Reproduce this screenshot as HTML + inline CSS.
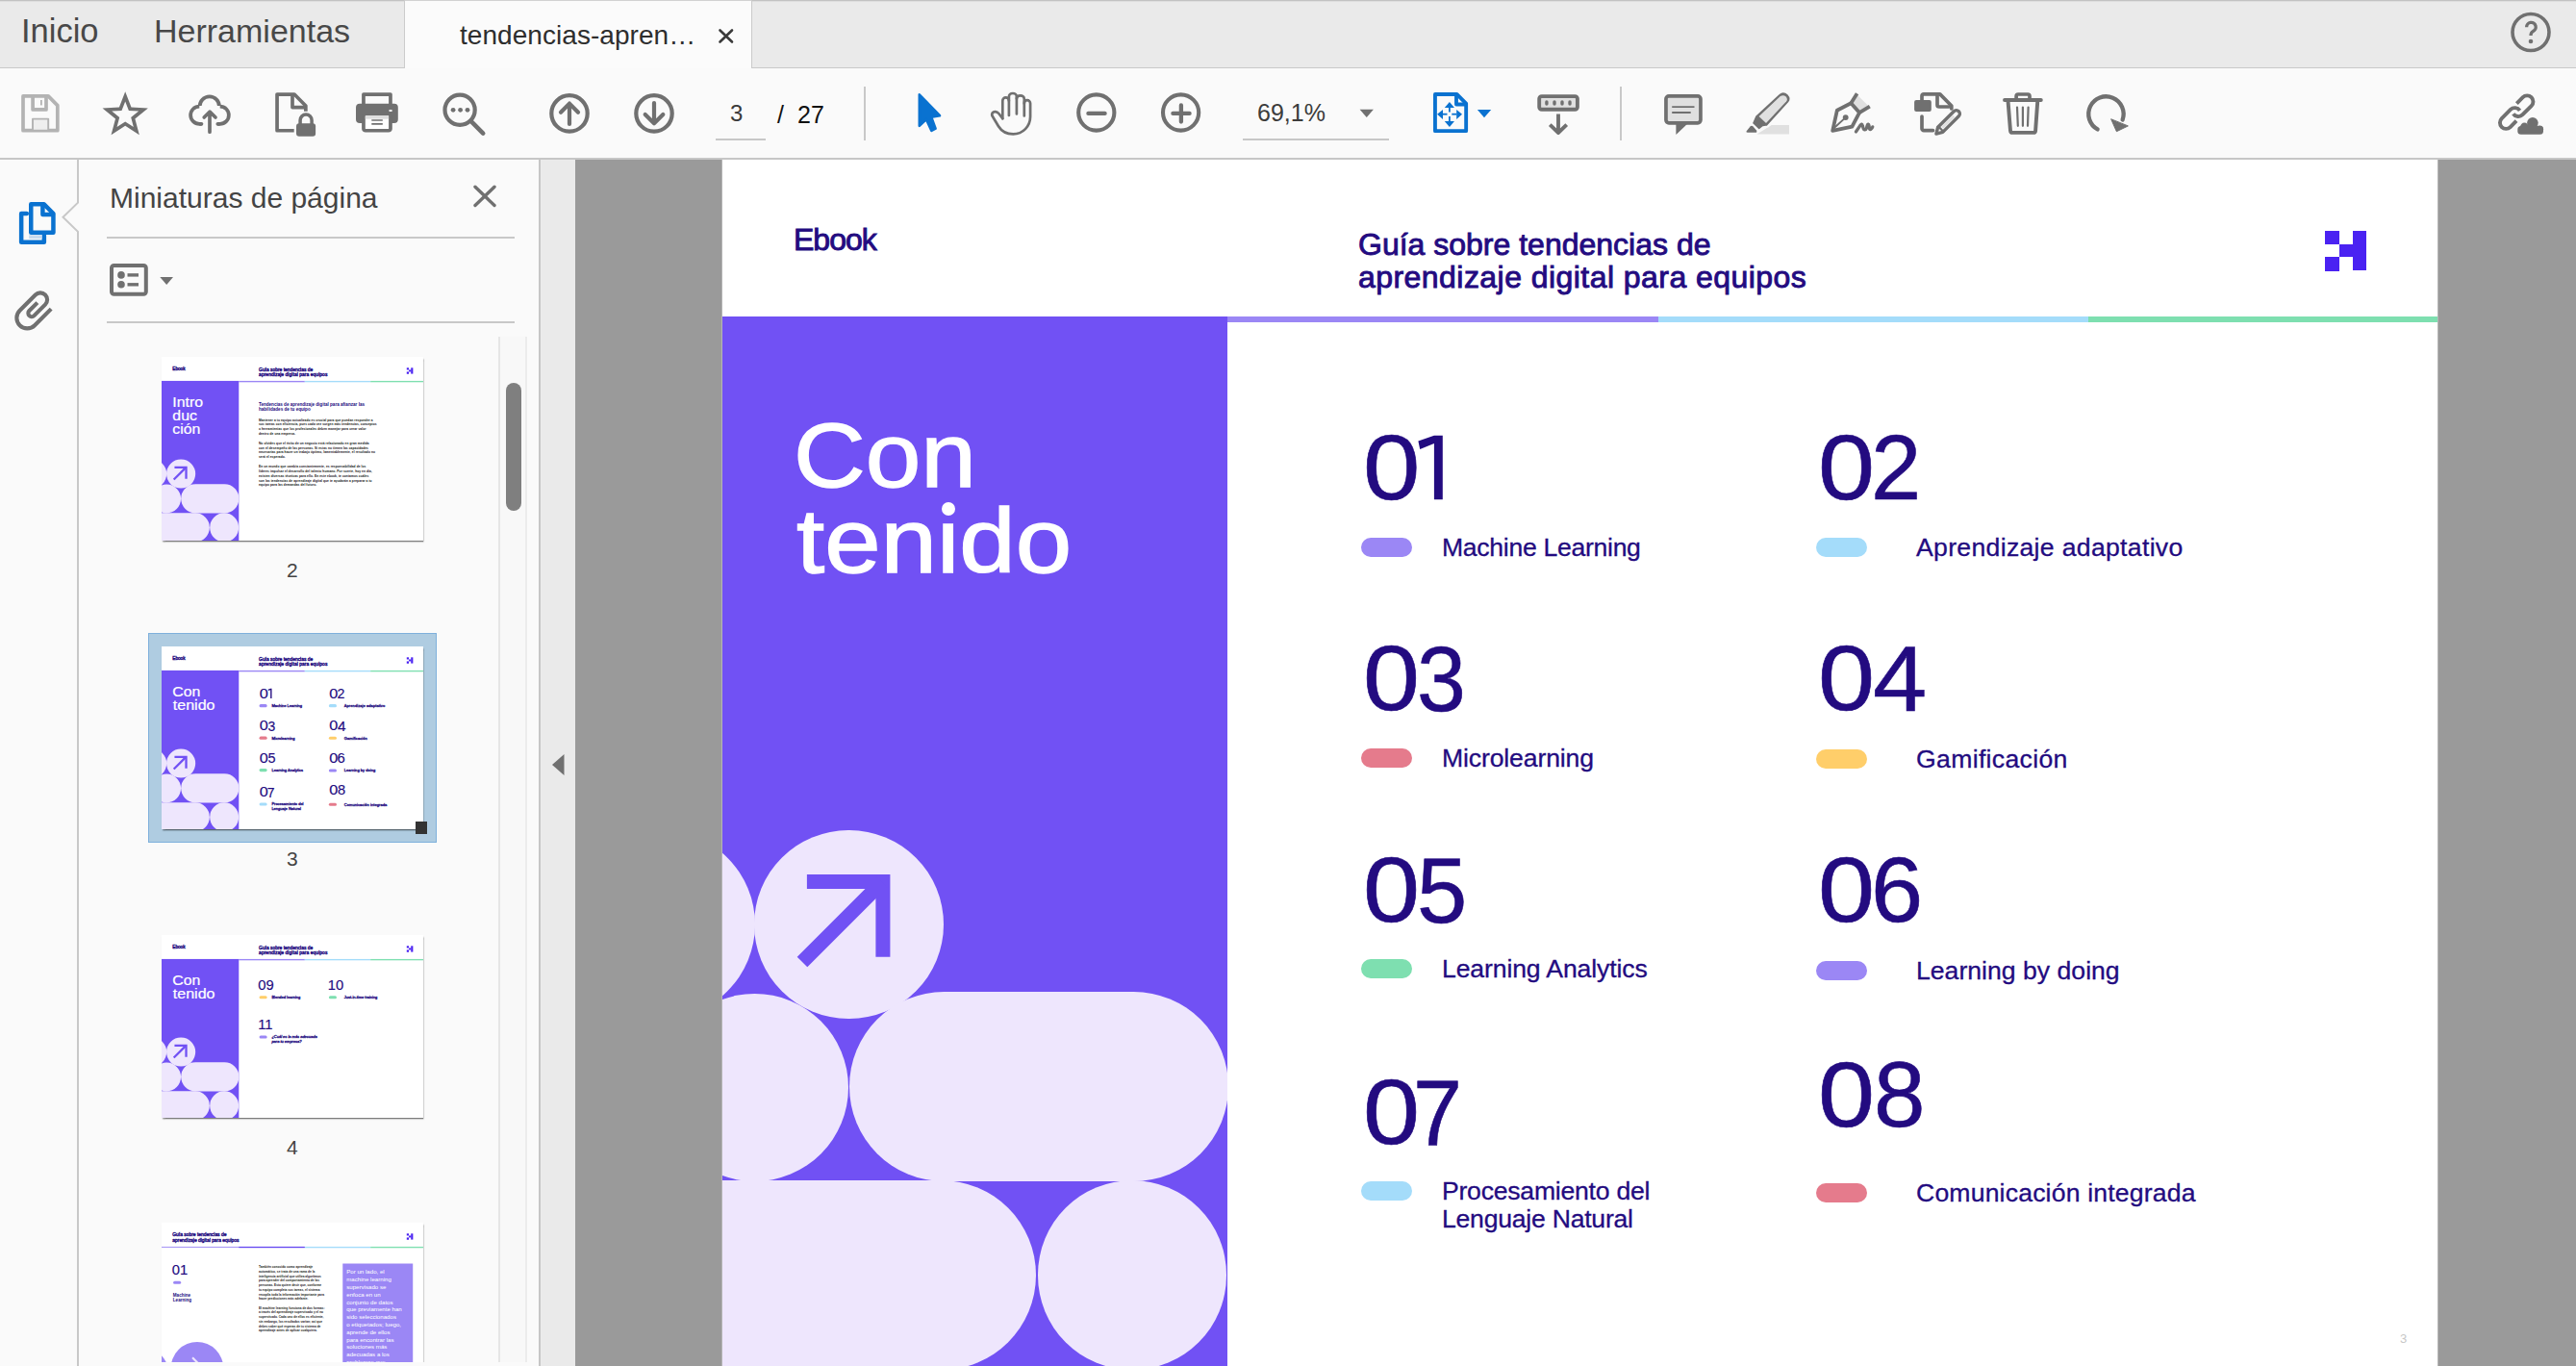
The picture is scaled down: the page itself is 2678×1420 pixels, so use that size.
<!DOCTYPE html>
<html><head><meta charset="utf-8">
<style>
*{margin:0;padding:0;box-sizing:border-box}
html,body{width:2678px;height:1420px;overflow:hidden;background:#9a9a9a;font-family:"Liberation Sans",sans-serif}
.a{position:absolute}
.t{position:absolute;white-space:nowrap;line-height:1}
svg{position:absolute;overflow:visible}
.hd{color:#230b80;-webkit-text-stroke:0.9px #230b80}
.lg{background:#4a22f2}
.num{font-size:96.5px;color:#230b80;-webkit-text-stroke:0.6px #230b80}
.pill{width:52.6px;height:20.2px;border-radius:10.1px}
.lab{font-size:26.6px;line-height:29px;color:#230b80;letter-spacing:-0.3px;-webkit-text-stroke:0.3px #230b80}
.lav{background:#eee6fd}
.th .hd{-webkit-text-stroke:2.5px #230b80}
.th .lab{-webkit-text-stroke:2px #230b80}
.th .num{-webkit-text-stroke:1px #230b80}
</style></head><body>
<!-- ===== TAB BAR ===== -->
<div class="a" style="left:0;top:0;width:2678px;height:71px;background:#eaeaea"></div>
<div class="a" style="left:0;top:0;width:2678px;height:1px;background:#c2c2c2"></div>
<div class="a" style="left:0;top:1px;width:2678px;height:1px;background:#dedede"></div>
<div class="a" style="left:0;top:70px;width:2678px;height:1px;background:#c9c9c9"></div>
<div class="a" style="left:420px;top:0;width:362px;height:71px;background:#fbfbfb;border-left:1px solid #cbcbcb;border-right:1px solid #cbcbcb"></div>
<div class="a" style="left:421px;top:0;width:360px;height:1px;background:#d2d2d2"></div>
<div class="t" style="left:22px;top:15px;font-size:34.5px;color:#484848">Inicio</div>
<div class="t" style="left:160px;top:15px;font-size:34px;color:#484848">Herramientas</div>
<div class="t" style="left:478px;top:22.5px;font-size:28px;color:#2e2e2e;letter-spacing:0.05px">tendencias-apren&#8230;</div>
<!-- ===== TOOLBAR ===== -->
<div class="a" style="left:0;top:71px;width:2678px;height:93px;background:#fafafa"></div>
<div class="a" style="left:0;top:164px;width:2678px;height:2px;background:#c6c6c6"></div>
<!-- ===== LEFT RAIL + PANEL ===== -->
<div class="a" style="left:0;top:166px;width:560px;height:1254px;background:#fafafa"></div>
<div class="a" style="left:560px;top:166px;width:2px;height:1254px;background:#c6c6c6"></div>
<div class="a" style="left:562px;top:166px;width:36px;height:1254px;background:#eaeaea"></div>
<!-- tab close x -->
<svg style="left:0;top:0" width="1" height="1"><path d="M748.5,31.5 L761,43.5 M761,31.5 L748.5,43.5" stroke="#3a3a3a" stroke-width="2.6" stroke-linecap="round"/></svg>
<!-- page nav text -->
<div class="t" style="left:759px;top:106px;font-size:24px;color:#3a3a3a">3</div>
<div class="a" style="left:744px;top:144px;width:52px;height:2px;background:#c8c8c8"></div>
<div class="t" style="left:808px;top:107px;font-size:25px;color:#111">/</div>
<div class="t" style="left:829px;top:107px;font-size:25px;color:#111">27</div>
<div class="t" style="left:1307px;top:105px;font-size:25px;color:#3c3c3c">69,1%</div>
<div class="a" style="left:1292px;top:144px;width:152px;height:2px;background:#c8c8c8"></div>
<!-- rail border with notch -->
<svg style="left:0;top:0" width="1" height="1"><path d="M81,166 V210.7 L65.5,225.8 L81,240.9 V1420" fill="none" stroke="#c8c8c8" stroke-width="2"/></svg>
<!-- panel header -->
<div class="t" style="left:114px;top:190.5px;font-size:30px;color:#444">Miniaturas de página</div>
<div class="a" style="left:111px;top:246px;width:424px;height:2px;background:#c8c8c8"></div>
<div class="a" style="left:111px;top:334px;width:424px;height:2px;background:#c8c8c8"></div>
<!-- scrollbar -->
<div class="a" style="left:518px;top:350px;width:30px;height:1066px;background:#f8f8f8;border-left:2px solid #e6e6e6;border-right:2px solid #ececec"></div>
<div class="a" style="left:526px;top:398px;width:16px;height:133px;border-radius:8px;background:#7f7f7f"></div>

<div class="a" style="left:750px;top:166px;width:1px;height:1254px;background:#b5b5b5"></div>
<div class="a" style="left:751px;top:166px;width:1783px;height:1254px;overflow:hidden">
<div class="a" style="left:0;top:0;width:1783px;height:1260px;background:#fff;overflow:hidden"><div class="t hd" style="left:74px;top:67px;font-size:32px;letter-spacing:-1px">Ebook</div><div class="t hd" style="left:661px;top:70.5px;font-size:32px;line-height:34.8px">Guía sobre tendencias de<br><span style="letter-spacing:0.45px">aprendizaje digital para equipos</span></div><div class="a lg" style="left:1666px;top:74px;width:15px;height:14px"></div><div class="a lg" style="left:1681px;top:88px;width:14px;height:13px"></div><div class="a lg" style="left:1666px;top:101px;width:15px;height:15px"></div><div class="a lg" style="left:1695px;top:74px;width:14px;height:41px"></div><div class="a" style="left:525px;top:163px;width:448px;height:6px;background:#9b87f5"></div><div class="a" style="left:973px;top:163px;width:447px;height:6px;background:#a4dcfa"></div><div class="a" style="left:1420px;top:163px;width:363px;height:6px;background:#7edfb0"></div><div class="t num" style="left:665.58px;top:271.80px;transform:scaleX(1.1064);transform-origin:0 0">0</div><svg style="left:0;top:0" width="1" height="1"><polygon fill="#230b80" points="748.8,286.8 748.8,353.2 739.9,353.2 739.9,295.1 725.2,301.0 723.4,292.4 739.9,286.8"/></svg><div class="t num" style="left:1138.90px;top:271.90px;transform:scaleX(1.1000);transform-origin:0 0">0</div><div class="t num" style="left:1194.31px;top:271.90px;transform:scaleX(0.9733);transform-origin:0 0">2</div><div class="t num" style="left:665.91px;top:490.90px;transform:scaleX(1.0979);transform-origin:0 0">0</div><div class="t num" style="left:722.06px;top:491.90px;transform:scaleX(0.9468);transform-origin:0 0">3</div><div class="t num" style="left:1138.90px;top:490.90px;transform:scaleX(1.1000);transform-origin:0 0">0</div><div class="t num" style="left:1195.81px;top:491.90px;transform:scaleX(1.0469);transform-origin:0 0">4</div><div class="t num" style="left:665.90px;top:710.90px;transform:scaleX(1.1000);transform-origin:0 0">0</div><div class="t num" style="left:722.30px;top:711.90px;transform:scaleX(0.9739);transform-origin:0 0">5</div><div class="t num" style="left:1138.90px;top:710.90px;transform:scaleX(1.1000);transform-origin:0 0">0</div><div class="t num" style="left:1194.17px;top:710.90px;transform:scaleX(1.0087);transform-origin:0 0">6</div><div class="t num" style="left:665.90px;top:941.90px;transform:scaleX(1.1000);transform-origin:0 0">0</div><div class="t num" style="left:717.85px;top:942.80px;transform:scaleX(0.9500);transform-origin:0 0">7</div><div class="t num" style="left:1138.90px;top:923.80px;transform:scaleX(1.1000);transform-origin:0 0">0</div><div class="t num" style="left:1196.52px;top:923.80px;transform:scaleX(0.9957);transform-origin:0 0">8</div><div class="a pill" style="left:664.2px;top:392.79999999999995px;background:#9b87f5"></div><div class="t lab" style="left:748px;top:388.79999999999995px;letter-spacing:-0.300px">Machine Learning</div><div class="a pill" style="left:1137px;top:392.79999999999995px;background:#a4dcfa"></div><div class="t lab" style="left:1241px;top:388.79999999999995px;letter-spacing:0.319px">Aprendizaje adaptativo</div><div class="a pill" style="left:664.2px;top:611.5px;background:#e57b8c"></div><div class="t lab" style="left:748px;top:607.5px;letter-spacing:-0.133px">Microlearning</div><div class="a pill" style="left:1137px;top:613px;background:#ffce6a"></div><div class="t lab" style="left:1241px;top:609px;letter-spacing:0.336px">Gamificación</div><div class="a pill" style="left:664.2px;top:831px;background:#7edfb0"></div><div class="t lab" style="left:748px;top:827px;letter-spacing:-0.124px">Learning Analytics</div><div class="a pill" style="left:1137px;top:833px;background:#9b87f5"></div><div class="t lab" style="left:1241px;top:829px;letter-spacing:0.013px">Learning by doing</div><div class="a pill" style="left:664.2px;top:1062px;background:#a4dcfa"></div><div class="t lab" style="left:748px;top:1058px;letter-spacing:-0.237px">Procesamiento del<br>Lenguaje Natural</div><div class="a pill" style="left:1137px;top:1064px;background:#e57b8c"></div><div class="t lab" style="left:1241px;top:1060px;letter-spacing:0.176px">Comunicación integrada</div><div class="t" style="left:1744px;top:1219px;font-size:13px;color:#c8c8c8">3</div><div class="a" style="left:0;top:163px;width:525px;height:1100px;background:#7151f4;overflow:hidden"><div class="t" style="left:74px;top:97px;font-size:95px;color:#fff;-webkit-text-stroke:1.4px #fff;transform:scaleX(1.09);transform-origin:0 0">Con</div><div class="t" style="left:77px;top:186px;font-size:95px;color:#fff;-webkit-text-stroke:1.4px #fff;transform:scaleX(1.105);transform-origin:0 0">tenido</div><div class="a" style="left:228px;top:194.5px;width:13.5px;height:12.5px;background:#7151f4"></div><div class="a" style="left:227.7px;top:193.1px;width:14px;height:14px;border-radius:50%;background:#fff"></div><div class="a" style="left:0;top:-163px;width:525px;height:1260px"><div class="a lav" style="left:-162.79999999999995px;top:696.6px;width:196.8px;height:196.8px;border-radius:50%"></div><div class="a lav" style="left:33.0px;top:696.6px;width:196.8px;height:196.8px;border-radius:50%"></div><div class="a lav" style="left:-64.10000000000002px;top:866.7px;width:195.0px;height:195.0px;border-radius:50%"></div><div class="a lav" style="left:131.79999999999995px;top:864.8px;width:393.9000000000001px;height:196.8px;border-radius:98.4px"></div><div class="a lav" style="left:-151px;top:1060.8999999999999px;width:477.29999999999995px;height:196.8px;border-radius:98.4px"></div><div class="a lav" style="left:327.5999999999999px;top:1060.8999999999999px;width:196.8px;height:196.8px;border-radius:50%"></div><svg style="left:0;top:0" width="1" height="1"><path d="M87.89999999999998,750.5 H166.89999999999998 V828.8" fill="none" stroke="#7151f4" stroke-width="15"/><path d="M166,751 L83,834" stroke="#7151f4" stroke-width="15"/></svg></div></div></div>
</div>
<div class="a" style="left:2534px;top:166px;width:1px;height:1254px;background:#b5b5b5"></div>

<div class="a" style="left:83px;top:336px;width:434px;height:1079.7px;overflow:hidden"><div class="a" style="left:-83px;top:-336px;width:600px;height:1500px"><div class="a" style="left:167.7px;top:371.4px;width:272.7px;height:190.3px;overflow:hidden;background:#fff;box-shadow:0.5px 1.5px 1.5px rgba(0,0,0,0.5)"><div class="a th" style="left:0;top:0;width:1783px;height:1244px;transform:scale(0.15294);transform-origin:0 0"><div class="a" style="left:0;top:0;width:1783px;height:1260px;background:#fff;overflow:hidden"><div class="t hd" style="left:74px;top:67px;font-size:32px;letter-spacing:-1px">Ebook</div><div class="t hd" style="left:661px;top:70.5px;font-size:32px;line-height:34.8px">Guía sobre tendencias de<br><span style="letter-spacing:0.45px">aprendizaje digital para equipos</span></div><div class="a lg" style="left:1666px;top:74px;width:15px;height:14px"></div><div class="a lg" style="left:1681px;top:88px;width:14px;height:13px"></div><div class="a lg" style="left:1666px;top:101px;width:15px;height:15px"></div><div class="a lg" style="left:1695px;top:74px;width:14px;height:41px"></div><div class="a" style="left:525px;top:163px;width:448px;height:9px;background:#9b87f5"></div><div class="a" style="left:973px;top:163px;width:447px;height:9px;background:#a4dcfa"></div><div class="a" style="left:1420px;top:163px;width:363px;height:9px;background:#7edfb0"></div><div class="t" style="left:660px;top:307px;font-size:30px;line-height:34px;font-weight:bold;color:#230b80">Tendencias de aprendizaje digital para afianzar las<br>habilidades de tu equipo</div><div class="t" style="left:660px;top:417px;font-size:21px;font-weight:bold;letter-spacing:0.6px;color:#111">Mantener a tu equipo actualizado es crucial para que puedan responder a</div><div class="t" style="left:660px;top:448.7px;font-size:21px;font-weight:bold;letter-spacing:0.6px;color:#111">sus tareas con eficiencia, pues cada vez surgen más tendencias, conceptos</div><div class="t" style="left:660px;top:480.4px;font-size:21px;font-weight:bold;letter-spacing:0.6px;color:#111">o herramientas que los profesionales deben manejar para crear valor</div><div class="t" style="left:660px;top:512.1px;font-size:21px;font-weight:bold;letter-spacing:0.6px;color:#111">dentro de una empresa.</div><div class="t" style="left:660px;top:575.8000000000001px;font-size:21px;font-weight:bold;letter-spacing:0.6px;color:#111">No olvides que el éxito de un negocio está relacionado en gran medida</div><div class="t" style="left:660px;top:607.5000000000001px;font-size:21px;font-weight:bold;letter-spacing:0.6px;color:#111">con el desempeño de las personas. Si estas no tienen las capacidades</div><div class="t" style="left:660px;top:639.2000000000002px;font-size:21px;font-weight:bold;letter-spacing:0.6px;color:#111">necesarias para hacer un trabajo óptimo, lamentablemente, el resultado no</div><div class="t" style="left:660px;top:670.9000000000002px;font-size:21px;font-weight:bold;letter-spacing:0.6px;color:#111">será el esperado.</div><div class="t" style="left:660px;top:734.6000000000003px;font-size:21px;font-weight:bold;letter-spacing:0.6px;color:#111">En un mundo que cambia constantemente, es responsabilidad de los</div><div class="t" style="left:660px;top:766.3000000000003px;font-size:21px;font-weight:bold;letter-spacing:0.6px;color:#111">líderes impulsar el desarrollo del talento humano. Por suerte, hoy en día,</div><div class="t" style="left:660px;top:798.0000000000003px;font-size:21px;font-weight:bold;letter-spacing:0.6px;color:#111">existen diversas técnicas para ello. En este ebook, te contamos cuáles</div><div class="t" style="left:660px;top:829.7000000000004px;font-size:21px;font-weight:bold;letter-spacing:0.6px;color:#111">son las tendencias de aprendizaje digital que te ayudarán a preparar a tu</div><div class="t" style="left:660px;top:861.4000000000004px;font-size:21px;font-weight:bold;letter-spacing:0.6px;color:#111">equipo para las demandas del futuro.</div><div class="a" style="left:0;top:163px;width:525px;height:1100px;background:#7151f4;overflow:hidden"><div class="t" style="left:74px;top:103px;font-size:95px;line-height:89px;color:#fff;-webkit-text-stroke:1.4px #fff;transform:scaleX(1.09);transform-origin:0 0">Intro<br>duc<br>ción</div><div class="a" style="left:0;top:-163px;width:525px;height:1260px"><div class="a lav" style="left:-162.79999999999995px;top:696.6px;width:196.8px;height:196.8px;border-radius:50%"></div><div class="a lav" style="left:33.0px;top:696.6px;width:196.8px;height:196.8px;border-radius:50%"></div><div class="a lav" style="left:-64.10000000000002px;top:866.7px;width:195.0px;height:195.0px;border-radius:50%"></div><div class="a lav" style="left:131.79999999999995px;top:864.8px;width:393.9000000000001px;height:196.8px;border-radius:98.4px"></div><div class="a lav" style="left:-151px;top:1060.8999999999999px;width:477.29999999999995px;height:196.8px;border-radius:98.4px"></div><div class="a lav" style="left:327.5999999999999px;top:1060.8999999999999px;width:196.8px;height:196.8px;border-radius:50%"></div><svg style="left:0;top:0" width="1" height="1"><path d="M87.89999999999998,750.5 H166.89999999999998 V828.8" fill="none" stroke="#7151f4" stroke-width="15"/><path d="M166,751 L83,834" stroke="#7151f4" stroke-width="15"/></svg></div></div></div></div></div><div class="a" style="left:154px;top:658px;width:300px;height:218px;background:#afcce1;border:1px solid #7eb0dc"></div><div class="a" style="left:167.7px;top:671.8px;width:272.7px;height:190.3px;overflow:hidden;background:#fff;box-shadow:0.5px 1.5px 1.5px rgba(0,0,0,0.5)"><div class="a th" style="left:0;top:0;width:1783px;height:1244px;transform:scale(0.15294);transform-origin:0 0"><div class="a" style="left:0;top:0;width:1783px;height:1260px;background:#fff;overflow:hidden"><div class="t hd" style="left:74px;top:67px;font-size:32px;letter-spacing:-1px">Ebook</div><div class="t hd" style="left:661px;top:70.5px;font-size:32px;line-height:34.8px">Guía sobre tendencias de<br><span style="letter-spacing:0.45px">aprendizaje digital para equipos</span></div><div class="a lg" style="left:1666px;top:74px;width:15px;height:14px"></div><div class="a lg" style="left:1681px;top:88px;width:14px;height:13px"></div><div class="a lg" style="left:1666px;top:101px;width:15px;height:15px"></div><div class="a lg" style="left:1695px;top:74px;width:14px;height:41px"></div><div class="a" style="left:525px;top:163px;width:448px;height:9px;background:#9b87f5"></div><div class="a" style="left:973px;top:163px;width:447px;height:9px;background:#a4dcfa"></div><div class="a" style="left:1420px;top:163px;width:363px;height:9px;background:#7edfb0"></div><div class="t num" style="left:665.58px;top:271.80px;transform:scaleX(1.1064);transform-origin:0 0">0</div><svg style="left:0;top:0" width="1" height="1"><polygon fill="#230b80" points="748.8,286.8 748.8,353.2 739.9,353.2 739.9,295.1 725.2,301.0 723.4,292.4 739.9,286.8"/></svg><div class="t num" style="left:1138.90px;top:271.90px;transform:scaleX(1.1000);transform-origin:0 0">0</div><div class="t num" style="left:1194.31px;top:271.90px;transform:scaleX(0.9733);transform-origin:0 0">2</div><div class="t num" style="left:665.91px;top:490.90px;transform:scaleX(1.0979);transform-origin:0 0">0</div><div class="t num" style="left:722.06px;top:491.90px;transform:scaleX(0.9468);transform-origin:0 0">3</div><div class="t num" style="left:1138.90px;top:490.90px;transform:scaleX(1.1000);transform-origin:0 0">0</div><div class="t num" style="left:1195.81px;top:491.90px;transform:scaleX(1.0469);transform-origin:0 0">4</div><div class="t num" style="left:665.90px;top:710.90px;transform:scaleX(1.1000);transform-origin:0 0">0</div><div class="t num" style="left:722.30px;top:711.90px;transform:scaleX(0.9739);transform-origin:0 0">5</div><div class="t num" style="left:1138.90px;top:710.90px;transform:scaleX(1.1000);transform-origin:0 0">0</div><div class="t num" style="left:1194.17px;top:710.90px;transform:scaleX(1.0087);transform-origin:0 0">6</div><div class="t num" style="left:665.90px;top:941.90px;transform:scaleX(1.1000);transform-origin:0 0">0</div><div class="t num" style="left:717.85px;top:942.80px;transform:scaleX(0.9500);transform-origin:0 0">7</div><div class="t num" style="left:1138.90px;top:923.80px;transform:scaleX(1.1000);transform-origin:0 0">0</div><div class="t num" style="left:1196.52px;top:923.80px;transform:scaleX(0.9957);transform-origin:0 0">8</div><div class="a pill" style="left:664.2px;top:392.79999999999995px;background:#9b87f5"></div><div class="t lab" style="left:748px;top:388.79999999999995px;letter-spacing:-0.300px">Machine Learning</div><div class="a pill" style="left:1137px;top:392.79999999999995px;background:#a4dcfa"></div><div class="t lab" style="left:1241px;top:388.79999999999995px;letter-spacing:0.319px">Aprendizaje adaptativo</div><div class="a pill" style="left:664.2px;top:611.5px;background:#e57b8c"></div><div class="t lab" style="left:748px;top:607.5px;letter-spacing:-0.133px">Microlearning</div><div class="a pill" style="left:1137px;top:613px;background:#ffce6a"></div><div class="t lab" style="left:1241px;top:609px;letter-spacing:0.336px">Gamificación</div><div class="a pill" style="left:664.2px;top:831px;background:#7edfb0"></div><div class="t lab" style="left:748px;top:827px;letter-spacing:-0.124px">Learning Analytics</div><div class="a pill" style="left:1137px;top:833px;background:#9b87f5"></div><div class="t lab" style="left:1241px;top:829px;letter-spacing:0.013px">Learning by doing</div><div class="a pill" style="left:664.2px;top:1062px;background:#a4dcfa"></div><div class="t lab" style="left:748px;top:1058px;letter-spacing:-0.237px">Procesamiento del<br>Lenguaje Natural</div><div class="a pill" style="left:1137px;top:1064px;background:#e57b8c"></div><div class="t lab" style="left:1241px;top:1060px;letter-spacing:0.176px">Comunicación integrada</div><div class="t" style="left:1744px;top:1219px;font-size:13px;color:#c8c8c8">3</div><div class="a" style="left:0;top:163px;width:525px;height:1100px;background:#7151f4;overflow:hidden"><div class="t" style="left:74px;top:97px;font-size:95px;color:#fff;-webkit-text-stroke:1.4px #fff;transform:scaleX(1.09);transform-origin:0 0">Con</div><div class="t" style="left:77px;top:186px;font-size:95px;color:#fff;-webkit-text-stroke:1.4px #fff;transform:scaleX(1.105);transform-origin:0 0">tenido</div><div class="a" style="left:228px;top:194.5px;width:13.5px;height:12.5px;background:#7151f4"></div><div class="a" style="left:227.7px;top:193.1px;width:14px;height:14px;border-radius:50%;background:#fff"></div><div class="a" style="left:0;top:-163px;width:525px;height:1260px"><div class="a lav" style="left:-162.79999999999995px;top:696.6px;width:196.8px;height:196.8px;border-radius:50%"></div><div class="a lav" style="left:33.0px;top:696.6px;width:196.8px;height:196.8px;border-radius:50%"></div><div class="a lav" style="left:-64.10000000000002px;top:866.7px;width:195.0px;height:195.0px;border-radius:50%"></div><div class="a lav" style="left:131.79999999999995px;top:864.8px;width:393.9000000000001px;height:196.8px;border-radius:98.4px"></div><div class="a lav" style="left:-151px;top:1060.8999999999999px;width:477.29999999999995px;height:196.8px;border-radius:98.4px"></div><div class="a lav" style="left:327.5999999999999px;top:1060.8999999999999px;width:196.8px;height:196.8px;border-radius:50%"></div><svg style="left:0;top:0" width="1" height="1"><path d="M87.89999999999998,750.5 H166.89999999999998 V828.8" fill="none" stroke="#7151f4" stroke-width="15"/><path d="M166,751 L83,834" stroke="#7151f4" stroke-width="15"/></svg></div></div></div></div></div><div class="a" style="left:432px;top:854px;width:12.4px;height:12.5px;background:#333"></div><div class="a" style="left:167.7px;top:971.8px;width:272.7px;height:190.3px;overflow:hidden;background:#fff;box-shadow:0.5px 1.5px 1.5px rgba(0,0,0,0.5)"><div class="a th" style="left:0;top:0;width:1783px;height:1244px;transform:scale(0.15294);transform-origin:0 0"><div class="a" style="left:0;top:0;width:1783px;height:1260px;background:#fff;overflow:hidden"><div class="t hd" style="left:74px;top:67px;font-size:32px;letter-spacing:-1px">Ebook</div><div class="t hd" style="left:661px;top:70.5px;font-size:32px;line-height:34.8px">Guía sobre tendencias de<br><span style="letter-spacing:0.45px">aprendizaje digital para equipos</span></div><div class="a lg" style="left:1666px;top:74px;width:15px;height:14px"></div><div class="a lg" style="left:1681px;top:88px;width:14px;height:13px"></div><div class="a lg" style="left:1666px;top:101px;width:15px;height:15px"></div><div class="a lg" style="left:1695px;top:74px;width:14px;height:41px"></div><div class="a" style="left:525px;top:163px;width:448px;height:9px;background:#9b87f5"></div><div class="a" style="left:973px;top:163px;width:447px;height:9px;background:#a4dcfa"></div><div class="a" style="left:1420px;top:163px;width:363px;height:9px;background:#7edfb0"></div><div class="t num" style="left:655px;top:292px">09</div><div class="t num" style="left:1130px;top:292px">10</div><div class="t num" style="left:655px;top:562px">11</div><div class="a pill" style="left:664px;top:413px;background:#ffce6a"></div><div class="t lab" style="left:748px;top:409px">Blended learning</div><div class="a pill" style="left:1137px;top:413px;background:#7edfb0"></div><div class="t lab" style="left:1241px;top:409px">Just-in-time training</div><div class="a pill" style="left:664px;top:683px;background:#9b87f5"></div><div class="t lab" style="left:748px;top:679px;font-style:italic">¿Cuál es la más adecuada<br>para tu empresa?</div><div class="a" style="left:0;top:163px;width:525px;height:1100px;background:#7151f4;overflow:hidden"><div class="t" style="left:74px;top:97px;font-size:95px;color:#fff;-webkit-text-stroke:1.4px #fff;transform:scaleX(1.09);transform-origin:0 0">Con</div><div class="t" style="left:77px;top:186px;font-size:95px;color:#fff;-webkit-text-stroke:1.4px #fff;transform:scaleX(1.105);transform-origin:0 0">tenido</div><div class="a" style="left:0;top:-163px;width:525px;height:1260px"><div class="a lav" style="left:-162.79999999999995px;top:696.6px;width:196.8px;height:196.8px;border-radius:50%"></div><div class="a lav" style="left:33.0px;top:696.6px;width:196.8px;height:196.8px;border-radius:50%"></div><div class="a lav" style="left:-64.10000000000002px;top:866.7px;width:195.0px;height:195.0px;border-radius:50%"></div><div class="a lav" style="left:131.79999999999995px;top:864.8px;width:393.9000000000001px;height:196.8px;border-radius:98.4px"></div><div class="a lav" style="left:-151px;top:1060.8999999999999px;width:477.29999999999995px;height:196.8px;border-radius:98.4px"></div><div class="a lav" style="left:327.5999999999999px;top:1060.8999999999999px;width:196.8px;height:196.8px;border-radius:50%"></div><svg style="left:0;top:0" width="1" height="1"><path d="M87.89999999999998,750.5 H166.89999999999998 V828.8" fill="none" stroke="#7151f4" stroke-width="15"/><path d="M166,751 L83,834" stroke="#7151f4" stroke-width="15"/></svg></div></div></div></div></div><div class="a" style="left:167.7px;top:1271.4px;width:272.7px;height:190.3px;overflow:hidden;background:#fff;box-shadow:0.5px 1.5px 1.5px rgba(0,0,0,0.5)"><div class="a th" style="left:0;top:0;width:1783px;height:1244px;transform:scale(0.15294);transform-origin:0 0"><div class="a" style="left:0;top:0;width:1783px;height:1260px;background:#fff;overflow:hidden"><div class="a lg" style="left:1666px;top:74px;width:15px;height:14px"></div><div class="a lg" style="left:1681px;top:88px;width:14px;height:13px"></div><div class="a lg" style="left:1666px;top:101px;width:15px;height:15px"></div><div class="a lg" style="left:1695px;top:74px;width:14px;height:41px"></div><div class="a" style="left:525px;top:163px;width:448px;height:9px;background:#9b87f5"></div><div class="a" style="left:973px;top:163px;width:447px;height:9px;background:#a4dcfa"></div><div class="a" style="left:1420px;top:163px;width:363px;height:9px;background:#7edfb0"></div><div class="t hd" style="left:74px;top:66px;font-size:32px;line-height:34.8px">Guía sobre tendencias de<br>aprendizaje digital para equipos</div><div class="a" style="left:0;top:163px;width:525px;height:6px;background:#9b87f5"></div><div class="a" style="left:525px;top:163px;width:448px;height:6px;background:#5b3cf0"></div><div class="t num" style="left:70px;top:270px">01</div><div class="a pill" style="left:79px;top:397px;background:#9b87f5"></div><div class="t" style="left:77px;top:480px;font-size:30px;line-height:32px;font-weight:bold;color:#230b80">Machine<br>Learning</div><div class="t" style="left:660px;top:290px;font-size:21px;font-weight:bold;color:#222">También conocido como aprendizaje</div><div class="t" style="left:660px;top:321px;font-size:21px;font-weight:bold;color:#222">automático, se trata de una rama de la</div><div class="t" style="left:660px;top:352px;font-size:21px;font-weight:bold;color:#222">inteligencia artificial que utiliza algoritmos</div><div class="t" style="left:660px;top:383px;font-size:21px;font-weight:bold;color:#222">para aprender del comportamiento de las</div><div class="t" style="left:660px;top:414px;font-size:21px;font-weight:bold;color:#222">personas. Esto quiere decir que, conforme</div><div class="t" style="left:660px;top:445px;font-size:21px;font-weight:bold;color:#222">tu equipo completa sus tareas, el sistema</div><div class="t" style="left:660px;top:476px;font-size:21px;font-weight:bold;color:#222">recopila toda la información importante para</div><div class="t" style="left:660px;top:507px;font-size:21px;font-weight:bold;color:#222">hacer predicciones más adelante.</div><div class="t" style="left:660px;top:568px;font-size:21px;font-weight:bold;color:#222">El machine learning funciona de dos formas:</div><div class="t" style="left:660px;top:599px;font-size:21px;font-weight:bold;color:#222">a través del aprendizaje supervisado y el no</div><div class="t" style="left:660px;top:630px;font-size:21px;font-weight:bold;color:#222">supervisado. Cada uno de ellos es eficiente,</div><div class="t" style="left:660px;top:661px;font-size:21px;font-weight:bold;color:#222">sin embargo, los resultados varían; así que</div><div class="t" style="left:660px;top:692px;font-size:21px;font-weight:bold;color:#222">debes saber qué esperas de tu sistema de</div><div class="t" style="left:660px;top:723px;font-size:21px;font-weight:bold;color:#222">aprendizaje antes de aplicar cualquiera.</div><div class="a" style="left:1231px;top:278px;width:477px;height:1000px;background:#9b87f5"></div><div class="t" style="left:1257px;top:315px;font-size:40px;color:#fff">Por un lado, el</div><div class="t" style="left:1257px;top:366px;font-size:40px;color:#fff">machine learning</div><div class="t" style="left:1257px;top:417px;font-size:40px;color:#fff">supervisado se</div><div class="t" style="left:1257px;top:468px;font-size:40px;color:#fff">enfoca en un</div><div class="t" style="left:1257px;top:519px;font-size:40px;color:#fff">conjunto de datos</div><div class="t" style="left:1257px;top:570px;font-size:40px;color:#fff">que previamente han</div><div class="t" style="left:1257px;top:621px;font-size:40px;color:#fff">sido seleccionados</div><div class="t" style="left:1257px;top:672px;font-size:40px;color:#fff">o etiquetados; luego,</div><div class="t" style="left:1257px;top:723px;font-size:40px;color:#fff">aprende de ellos</div><div class="t" style="left:1257px;top:774px;font-size:40px;color:#fff">para encontrar las</div><div class="t" style="left:1257px;top:825px;font-size:40px;color:#fff">soluciones más</div><div class="t" style="left:1257px;top:876px;font-size:40px;color:#fff">adecuadas a los</div><div class="t" style="left:1257px;top:927px;font-size:40px;color:#fff">problemas que</div><div class="a" style="left:63px;top:811px;width:357px;height:357px;border-radius:50%;background:#9b87f5"></div><div class="a" style="left:-307px;top:850px;width:357px;height:357px;border-radius:50%;background:#9b87f5"></div><div class="a" style="left:245px;top:900px;width:14px;height:120px;background:#ede5fd;transform:rotate(-45deg)"></div></div></div></div><div class="t" style="left:298px;top:582px;font-size:21px;color:#444">2</div><div class="t" style="left:298px;top:881.5px;font-size:21px;color:#444">3</div><div class="t" style="left:298px;top:1181.5px;font-size:21px;color:#444">4</div></div></div>
<svg style="left:0;top:0" width="2678" height="1420" viewBox="0 0 2678 1420">
<g fill="none" stroke="#707070" stroke-width="3.7" stroke-linejoin="round" stroke-linecap="round">
 <!-- save (disabled) -->
 <g stroke="#b3b3b3">
  <path d="M24,99.9 H50.2 L59.8,109.6 V135.7 H24 Z"/>
  <path d="M34.1,100 V113.9 H48 V100"/>
  <rect x="34" y="123.6" width="16.2" height="12" fill="#efefef" stroke-width="1.9"/>
 </g>
 <rect x="42" y="104" width="1.8" height="5.4" fill="#b3b3b3" stroke="none"/>
 <!-- star -->
 <path fill="#707070" stroke="none" fill-rule="evenodd" d="M130.20,95.20 L136.49,111.44 L153.88,112.41 L140.38,123.41 L144.84,140.24 L130.20,130.80 L115.56,140.24 L120.02,123.41 L106.52,112.41 L123.91,111.44 Z M130.20,105.40 L133.90,115.00 L144.18,115.56 L136.19,122.05 L138.84,131.99 L130.20,126.40 L121.56,131.99 L124.21,122.05 L116.22,115.56 L126.50,115.00 Z"/>
 <!-- cloud upload -->
 <g fill="#707070" stroke="none">
  <circle cx="207.3" cy="119.7" r="11"/><circle cx="217.8" cy="110.5" r="12"/><circle cx="228.7" cy="119.7" r="11"/>
  <rect x="207.3" y="119.7" width="21.4" height="11"/>
 </g>
 <g fill="#fafafa" stroke="none">
  <circle cx="207.3" cy="119.7" r="7.3"/><circle cx="217.8" cy="110.5" r="8.3"/><circle cx="228.7" cy="119.7" r="7.3"/>
  <rect x="207.3" y="110" width="21.4" height="17"/>
  <rect x="209.6" y="125" width="16.6" height="8"/>
 </g>
 <circle cx="209.5" cy="128.85" r="1.85" fill="#707070" stroke="none"/>
 <circle cx="226.3" cy="128.85" r="1.85" fill="#707070" stroke="none"/>
 <path d="M218,137.2 V116.5 M212.2,122 L218,116.2 L224,122"/>
 <!-- file lock -->
 <path d="M305.7,135.75 H288.05 V98.05 H306 L317.85,110 V115.7" stroke-linecap="butt"/>
 <path d="M304,99 V111.6 H317"/>
 <rect x="308" y="128.3" width="20.1" height="13.5" rx="3" fill="#707070" stroke="none"/>
 <path d="M312.1,129 V125 A6,6 0 0 1 324.1,125 V129" stroke-width="3.5"/>
 <!-- printer -->
 <path d="M377.95,109 V98.05 H405.95 V109"/>
 <rect x="370" y="107.8" width="43.8" height="20.1" rx="4" fill="#707070" stroke="none"/>
 <rect x="404.3" y="114" width="3.5" height="2" rx="1" fill="#fafafa" stroke="none"/>
 <path d="M377.95,121 V133.7 A2,2 0 0 0 379.95,135.75 H403.95 A2,2 0 0 0 405.95,133.7 V121" fill="#fff"/>
 <rect x="379.8" y="120" width="24.3" height="3.7" fill="#dedede" stroke="none"/>
 <path d="M386.3,125 H397.8 M386.3,128.8 H397.8" stroke-width="1.7" stroke-linecap="butt"/>
 <!-- search dots -->
 <circle cx="478.1" cy="114.3" r="15.6" stroke-width="4.2"/>
 <path d="M490.8,127.2 L502.2,138.6" stroke-width="4.6"/>
 <g fill="#707070" stroke="none"><circle cx="471.1" cy="114.3" r="2.4"/><circle cx="478.6" cy="114.3" r="2.4"/><circle cx="486" cy="114.3" r="2.4"/></g>
 <!-- prev / next -->
 <circle cx="592" cy="117.9" r="18.7" stroke-width="4.2"/>
 <path d="M592,128.9 V107.8 M583,116.8 L592,107.6 L601,116.8" stroke-width="4.2"/>
 <circle cx="680" cy="117.9" r="18.7" stroke-width="4.2"/>
 <path d="M680,107 V128 M670.7,119 L680,128.3 L689.3,119" stroke-width="4.2"/>
 <!-- separators -->
 <path d="M899,90 V146 M1685,90 V146" stroke="#c8c8c8" stroke-width="2" stroke-linecap="butt"/>
 <!-- cursor -->
 <path d="M955.8,98.3 L977,120.2 L968.2,121.6 L972.6,133.6 L968.4,135.9 L963,124.1 L955.8,130.8 Z" fill="#0a72d0" stroke="#0a72d0" stroke-width="2.6"/>
 <!-- hand -->
 <g stroke-width="2.7">
  <path d="M1042.3,123.2 L1038.3,118 C1036.3,115.6 1033.2,115.4 1031.7,117.4 C1030.9,118.6 1031.1,119.9 1032,121.3 L1038,131.3 C1041.5,137 1046.8,139.4 1053.3,139.4 C1063.3,139.4 1071.1,131.3 1071.1,121.3 L1071.1,107.6 C1071.1,105.5 1069.6,104.1 1067.9,104.1 C1066.2,104.1 1064.8,105.5 1064.8,107.6"/>
  <path d="M1042.3,123.2 L1042.3,104.8 C1042.3,102.8 1043.7,101.3 1045.6,101.3 C1047.5,101.3 1048.9,102.8 1048.9,104.8 L1048.9,120"/>
  <path d="M1048.9,104.8 L1048.9,100.6 C1048.9,98.6 1050.6,97 1052.9,97 C1055.2,97 1056.9,98.6 1056.9,100.6 L1056.9,118.5"/>
  <path d="M1056.9,102.6 C1056.9,100.6 1058.6,99.3 1060.8,99.3 C1063,99.3 1064.8,100.7 1064.8,102.8 L1064.8,120.5"/>
 </g>
 <!-- zoom out / in -->
 <circle cx="1139.8" cy="117" r="18.6" stroke-width="4.1"/>
 <path d="M1131.4,117.9 H1148.6" stroke-width="4.3"/>
 <circle cx="1227.6" cy="117" r="18.6" stroke-width="4.1"/>
 <path d="M1219.4,117.9 H1236.6 M1227.9,109.5 V126.6" stroke-width="4.3"/>
 <polygon points="1413.6,113.8 1427.9,113.8 1420.75,122" fill="#707070" stroke="none"/>
 <!-- fit page (blue) -->
 <g stroke="#0a72d0" stroke-width="3.85">
  <path d="M1491.95,97.95 H1514.5 L1524.15,107.6 V136.15 H1491.95 Z"/>
  <path d="M1514,99 V108.5 H1523"/>
 </g>
 <g fill="#0a72d0" stroke="none">
  <polygon points="1506.9,105.9 1512,111.9 1501.8,111.9"/>
  <polygon points="1506.9,132 1512,126 1501.8,126"/>
  <polygon points="1494.1,118.7 1500,114 1500,123.9"/>
  <polygon points="1520,118.7 1514.2,114 1514.2,123.9"/>
  <rect x="1506" y="111.5" width="1.8" height="5"/><rect x="1506" y="121" width="1.8" height="5"/>
  <rect x="1499.5" y="117.8" width="5" height="1.8"/><rect x="1509.3" y="117.8" width="5" height="1.8"/>
  <polygon points="1535.9,114 1550.2,114 1543,122.2"/>
 </g>
 <!-- ruler down -->
 <rect x="1600.2" y="100.1" width="39.7" height="13.7" rx="2.5" fill="#e0e0e0" stroke-width="3.85"/>
 <g fill="#707070" stroke="none">
  <rect x="1606.2" y="104.2" width="3.4" height="5.6" rx="1.7"/><rect x="1614.3" y="104.2" width="3.4" height="5.6" rx="1.7"/>
  <rect x="1622.3" y="104.2" width="3.4" height="5.6" rx="1.7"/><rect x="1630.3" y="104.2" width="3.4" height="5.6" rx="1.7"/>
 </g>
 <path d="M1620,118.5 V137.3 M1611.3,129.6 L1620,138 L1628.7,129.6" stroke-width="3.85" stroke-linecap="butt"/>
 <!-- comment -->
 <rect x="1731.95" y="99.85" width="36" height="28" rx="3" fill="#e0e0e0"/>
 <polygon points="1742.4,128 1742.4,140 1755,128" fill="#707070" stroke="none"/>
 <path d="M1738.2,111.1 H1761.5 M1738.2,117 H1757.7" stroke-width="1.8" stroke-linecap="butt"/>
 <!-- highlighter -->
 <polygon points="1826.5,139.6 1841.7,130.1 1860,130.1 1860,139.6" fill="#e0e0e0" stroke="none"/>
 <g transform="translate(1841,115) scale(1.08) translate(-1841,-115)"><path d="M1822.3,127.4 L1825.7,119.5 L1848.5,98.5 Q1853,94.5 1858,99 Q1862,103.5 1858.5,107.5 L1837.9,130.3 L1833.5,131 L1829.5,134.3 Z" fill="#707070" stroke="#fafafa" stroke-width="2"/>
 <path d="M1829.5,120.5 L1850.1,101.2 Q1853,99.5 1855.5,101.5 Q1857.5,104 1856,106 L1836.4,127 Z" fill="#e0e0e0" stroke="none"/></g>
 <path d="M1815.5,136.5 L1819.5,131.5 Q1821,130 1822.5,131.5 L1826,135.5 Q1827,137.8 1825,137.8 L1817,137.8 Q1815,137.8 1815.5,136.5 Z" fill="#707070" stroke="none"/>
 <!-- pen sign -->
 <polygon points="1930,97.7 1943.3,111 1933,117.1 1924.3,107.2" fill="#e0e0e0" stroke="none"/>
 <path d="M1924.3,107.2 L1909.8,114.8 L1905.2,135.8 L1925.4,131.6 L1933,117.1 Z M1924.3,107.2 L1933,117.1" stroke-width="3.8"/>
 <path d="M1924.3,107.2 L1930.6,97.2 M1933,117.1 L1943.8,110.6" stroke-width="3.8" stroke-linecap="butt"/>
 <circle cx="1918.7" cy="122.1" r="2.95" fill="#707070" stroke="none"/>
 <path d="M1918.7,122.1 L1906.8,133" stroke-width="1.9"/>
 <path d="M1929.4,137 L1934.2,130 C1935,128.5 1936,128.7 1936.3,130.5 L1937.2,133.8 C1937.8,135.5 1939.5,135.3 1940.3,133.5 L1941.2,130.2 C1941.7,128.6 1942.9,128.8 1943.1,130.6 L1943.5,133.7 C1944,135.5 1946,134.5 1946.8,131.8" stroke-width="3.2"/>
 <!-- organize -->
 <path d="M1998,104 V99.8 A2,2 0 0 1 2000,97.9 H2016.8 L2028.8,110 V113"/>
 <path d="M1998,121 V133.5 A2,2 0 0 0 2000,135.6 H2009.5"/>
 <rect x="1990.1" y="104.1" width="17.7" height="11.8" rx="2" fill="#707070" stroke="none"/>
 <path d="M2014,99 V109 A2,2 0 0 0 2016,111 H2026"/>
 <g transform="translate(2023.5,128.5) rotate(45)">
  <path d="M-3.6,-14.5 A3.6,3.6 0 0 1 3.6,-14.5 V9 L0,15 L-3.6,9 Z" fill="#fafafa" stroke-width="3.4"/>
  <rect x="-1.5" y="-11" width="3" height="17" fill="#e0e0e0" stroke="none"/>
  <path d="M-3.6,8 H3.6" stroke-width="2.2"/>
 </g>
 <!-- trash -->
 <path d="M2084,104.05 H2121.8" stroke-width="3.9"/>
 <path d="M2096.1,102 V100 A2,2 0 0 1 2098.1,98 H2108 A2,2 0 0 1 2110,100 V102" stroke-width="3.7"/>
 <path d="M2087.6,106 L2090,135.8 A2.3,2.3 0 0 0 2092.3,137.9 H2113.8 A2.3,2.3 0 0 0 2116.1,135.8 L2118.2,106" stroke-width="3.9"/>
 <path d="M2097,111.5 L2097.8,130.8 M2102.9,111.5 V130.8 M2108.6,111.5 L2108,130.8" stroke-width="2.2"/>
 <!-- redo -->
 <path d="M2180.6,134.4 A18.2,18.2 0 1 1 2206.6,124.5" stroke-width="4.3"/>
 <polygon points="2194.8,124.1 2200.4,136.7 2212,131.1" fill="#707070" stroke="#707070" stroke-width="1"/>
 <!-- link cloud -->
 <g transform="translate(2616.2,116.6) rotate(45)" stroke-width="3.9" stroke-linecap="butt">
  <path d="M-6.3,-6.5 V-15.5 A6.3,6.3 0 0 1 6.3,-15.5 V-2.6 A6.3,6.3 0 0 1 -1.2,3.6"/>
  <path d="M6.3,6.5 V15.5 A6.3,6.3 0 0 1 -6.3,15.5 V2.6 A6.3,6.3 0 0 1 1.2,-3.6"/>
 </g>
 <g fill="#fafafa" stroke="#fafafa" stroke-width="3">
  <circle cx="2632.9" cy="127.8" r="5.8"/><circle cx="2624.4" cy="132" r="4.4"/><circle cx="2640.2" cy="134.3" r="3.9"/><rect x="2617" y="131" width="27" height="8.6" rx="4"/>
 </g>
 <g fill="#707070" stroke="none">
  <circle cx="2632.9" cy="127.8" r="5.8"/><circle cx="2624.4" cy="132" r="4.4"/><circle cx="2640.2" cy="134.3" r="3.9"/><rect x="2617.3" y="131" width="26.7" height="8.8" rx="3.5"/>
 </g>
 <!-- help -->
 <circle cx="2631" cy="33.5" r="19" stroke-width="3.6"/>
 <path d="M2626.6,28.2 A4.8,4.8 0 1 1 2633.2,32.6 C2631.5,33.5 2631,34.5 2631,37" stroke-width="3.3" stroke-linecap="butt"/>
 <circle cx="2631" cy="43" r="2.3" fill="#707070" stroke="none"/>
 <!-- rail: pages (blue) -->
 <g stroke="#0a72d0" stroke-width="4.5">
  <path d="M27.8,222.05 H22.15 V251.75 H45.85 V244.5"/>
  <path d="M32.25,212.35 H45.8 L55.45,222 V241.65 H32.25 Z"/>
  <path d="M44.4,213 V223.1 H55"/>
 </g>
 <rect x="30.2" y="244.3" width="13.3" height="3.7" fill="#c5d9ee" stroke="none"/>
 <!-- paperclip -->
 <g transform="translate(34,322) rotate(45)" stroke-width="4.1" stroke-linecap="butt">
  <path d="M12.9,-14.2 V10 A10.95,10.95 0 0 1 -9,10 V-13 A7.2,7.2 0 0 1 5.4,-13 V3.3 A3.6,3.6 0 0 1 -1.8,3.3 V-8.7"/>
 </g>
 <!-- panel close X -->
 <path d="M494,194.3 L514,213.5 M514,194.3 L494,213.5" stroke-width="3.4"/>
 <!-- list icon -->
 <rect x="116" y="275.9" width="35.8" height="29.9" rx="2.5" stroke-width="4"/>
 <g fill="#707070" stroke="none"><circle cx="126" cy="285.9" r="3.8"/><circle cx="126" cy="295.8" r="3.8"/>
 <rect x="132.5" y="284.2" width="11.5" height="3.4"/><rect x="132.5" y="294.1" width="11.5" height="3.4"/>
 <polygon points="166.3,288 180,288 173.2,296.1"/>
 <polygon points="586.5,784 586.5,806 574,795"/></g>
</g>
</svg>

</body></html>
